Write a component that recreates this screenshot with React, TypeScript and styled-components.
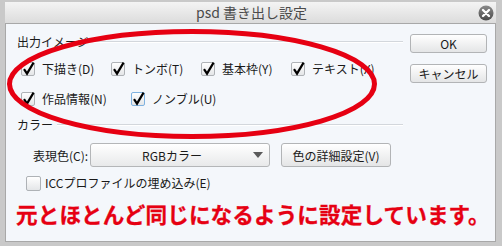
import styled, { createGlobalStyle } from "styled-components";

const GlobalStyle = createGlobalStyle`
  html, body {
    margin: 0;
    padding: 0;
    background: #c9c9c9;
  }
  body {
    font-family: "Noto Sans CJK JP", "Noto Sans", sans-serif;
    color: #1a1a1a;
  }
`;

interface CheckProps {
  label: string;
  checked?: boolean;
  focused?: boolean;
  size?: number;
  width?: number;
  gap?: number;
}

function Check({ label, checked = true, focused, size = 14, width, gap = 7 }: CheckProps) {
  return (
    <CheckItem $width={width} $gap={gap}>
      <Box $size={size} $focused={focused}>
        {checked && (
          <Mark viewBox="0 0 14 14" width={size} height={size}>
            <path d="M3 7.2 L6 11.6 L12.6 0.6" fill="none" stroke="#000" strokeWidth="2.2" strokeLinejoin="miter" />
          </Mark>
        )}
      </Box>
      <ItemText>{label}</ItemText>
    </CheckItem>
  );
}

export default function App() {
  return (
    <>
      <GlobalStyle />
      <Window>
        <TitleBar>
          <span />
          <Title>psd 書き出し設定</Title>
          <CloseIcon width="16" height="16" viewBox="0 0 16 16">
            <defs>
              <linearGradient id="cl" x1="0" y1="0" x2="0" y2="1">
                <stop offset="0" stopColor="#8a8a8a" />
                <stop offset="1" stopColor="#4a4a4a" />
              </linearGradient>
            </defs>
            <circle cx="8" cy="8" r="7.5" fill="url(#cl)" />
            <path d="M5 5 L11 11 M11 5 L5 11" stroke="#fff" strokeWidth="2.4" strokeLinecap="round" />
          </CloseIcon>
        </TitleBar>
        <Body>
          <Main>
            <GroupHeader>
              <GroupLabel>出力イメージ</GroupLabel>
              <Rule />
            </GroupHeader>
            <CheckGrid>
              <Check label="下描き(D)" />
              <Check label="トンボ(T)" />
              <Check label="基本枠(Y)" />
              <Check label="テキスト(X)" />
            </CheckGrid>
            <CheckRow>
              <Check label="作品情報(N)" width={110} />
              <Check label="ノンブル(U)" focused />
            </CheckRow>
            <GroupHeader $top={10}>
              <GroupLabel>カラー</GroupLabel>
              <Rule />
            </GroupHeader>
            <ColorRow>
              <FieldLabel>表現色(C):</FieldLabel>
              <Select>
                <SelectText>RGBカラー</SelectText>
                <Arrow />
              </Select>
              <Button $width={110}>色の詳細設定(V)</Button>
            </ColorRow>
            <IccRow>
              <Check label="ICCプロファイルの埋め込み(E)" checked={false} size={15} gap={4} />
            </IccRow>
          </Main>
          <Side>
            <Button $width={77} $height={19}>OK</Button>
            <Button $width={77} $height={19}>キャンセル</Button>
          </Side>
          <Note>元とほとんど同じになるように設定しています。</Note>
          <Overlay width="490" height="217" viewBox="0 0 490 217">
            <ellipse cx="186" cy="60" rx="182.5" ry="52.5" fill="none" stroke="#e60012" strokeWidth="5" />
          </Overlay>
        </Body>
      </Window>
    </>
  );
}

const Window = styled.div`
  width: 502px;
  height: 246px;
  box-sizing: border-box;
  padding: 2px 6px 4px 5px;
  background: #c9c9c9;
  display: flex;
  flex-direction: column;
`;

const TitleBar = styled.div`
  height: 21px;
  display: grid;
  grid-template-columns: 1fr auto 1fr;
  align-items: center;
  background: linear-gradient(#f4f4f4, #dcdcdc);
  padding-right: 2px;
`;

const Title = styled.div`
  font-size: 14px;
  color: #4a4a4a;
  line-height: 21px;
  padding-left: 4px;
`;

const CloseIcon = styled.svg`
  justify-self: end;
  margin-top: 1px;
`;

const Body = styled.div`
  position: relative;
  flex: 1;
  display: grid;
  grid-template-columns: 397px 1fr;
  grid-template-rows: auto 1fr;
  align-items: start;
  background: #f4f7fb;
  border: 1px solid #a8a8a8;
  overflow: hidden;
`;

const Main = styled.div`
  box-sizing: border-box;
  padding: 10px 0 0 11px;
  display: flex;
  flex-direction: column;
`;

const GroupHeader = styled.div<{ $top?: number }>`
  display: flex;
  align-items: center;
  height: 16px;
  margin-top: ${(p) => p.$top ?? 0}px;
`;

const GroupLabel = styled.span`
  font-size: 12px;
  line-height: 16px;
  color: #1a1a1a;
`;

const Rule = styled.div`
  flex: 1;
  margin-left: 4px;
  border-top: 1px solid #d3d7dc;
  border-bottom: 1px solid #ffffff;
`;

const CheckGrid = styled.div`
  display: grid;
  grid-template-columns: repeat(4, 90px);
  margin: 11px 0 0 4px;
`;

const CheckRow = styled.div`
  display: flex;
  margin: 14px 0 0 4px;
`;

const CheckItem = styled.label<{ $width?: number; $gap: number }>`
  display: flex;
  align-items: center;
  gap: ${(p) => p.$gap}px;
  height: 16px;
  width: ${(p) => (p.$width ? `${p.$width}px` : "auto")};
  flex: none;
`;

const Box = styled.span<{ $size: number; $focused?: boolean }>`
  position: relative;
  width: ${(p) => p.$size}px;
  height: ${(p) => p.$size}px;
  box-sizing: border-box;
  border: 1px solid ${(p) => (p.$focused ? "#7fb2e0" : "#aeb2b6")};
  border-radius: 2px;
  background: linear-gradient(#ffffff, #e4e6e8);
  flex: none;
`;

const Mark = styled.svg`
  position: absolute;
  left: -1px;
  top: -1px;
  overflow: visible;
`;

const ItemText = styled.span`
  font-size: 12px;
  line-height: 16px;
  white-space: nowrap;
`;

const ColorRow = styled.div`
  display: flex;
  align-items: center;
  height: 24px;
  margin: 10px 0 0 16px;
`;

const FieldLabel = styled.span`
  font-size: 12px;
  width: 57px;
  white-space: nowrap;
`;

const Select = styled.div`
  width: 180px;
  height: 24px;
  box-sizing: border-box;
  display: flex;
  align-items: center;
  border: 1px solid #b4b6b8;
  border-radius: 3px;
  background: linear-gradient(#ffffff, #e8e9ea);
  margin-right: 11px;
  padding-right: 6px;
`;

const SelectText = styled.span`
  flex: 1;
  text-align: center;
  font-size: 12px;
`;

const Arrow = styled.span`
  width: 0;
  height: 0;
  border-left: 5px solid transparent;
  border-right: 5px solid transparent;
  border-top: 6px solid #5a5a5a;
`;

const Button = styled.div<{ $width: number; $height?: number }>`
  width: ${(p) => p.$width}px;
  height: ${(p) => p.$height ?? 24}px;
  box-sizing: border-box;
  display: flex;
  align-items: center;
  justify-content: center;
  border: 1px solid #b2b4b6;
  border-radius: 3px;
  background: linear-gradient(#ffffff, #e4e5e6);
  font-size: 12px;
  color: #1a1a1a;
`;

const IccRow = styled.div`
  margin: 8px 0 0 9px;
`;

const Note = styled.div`
  grid-column: 1 / -1;
  margin-top: 11px;
  padding-left: 10px;
  font-size: 21.6px;
  line-height: 24px;
  font-weight: 700;
  letter-spacing: 0.1px;
  color: #e60012;
  white-space: nowrap;
  -webkit-text-stroke: 0.3px #e60012;
`;

const Side = styled.div`
  display: flex;
  flex-direction: column;
  gap: 11px;
  padding: 10px 0 0 7px;
`;

const Overlay = styled.svg`
  position: absolute;
  left: 0;
  top: 0;
  pointer-events: none;
`;
